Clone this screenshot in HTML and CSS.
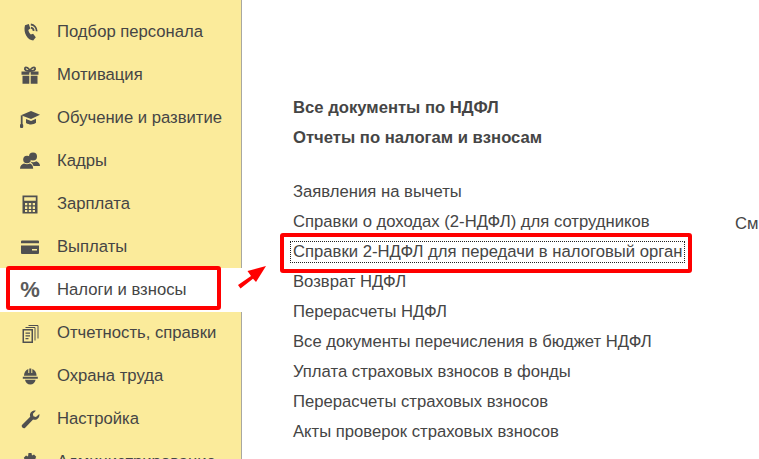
FILE: index.html
```html
<!DOCTYPE html>
<html lang="ru">
<head>
<meta charset="utf-8">
<title>Налоги и взносы</title>
<link rel="stylesheet" href="styles.css">
</head>
<body>
<div class="app">
  <nav class="sidebar">
    <a class="nav-item"><svg class="ico" viewBox="0 0 20 20"><path d="M5 3.300 8.800 2l1.500 4.600-2 1.500c.4 1.800 1.200 3.300 2.500 4.500l2.300-.9 2.700 3.500-2.600 3.300C8 18.500 2.800 11 5 3.300z"/><path class="ln" d="M10.800 2.500c3.200.4 5.800 3 5.900 6.800M10.900 5.700c1.600.2 2.700 1.500 2.800 3.200"/></svg><span>Подбор персонала</span></a>
    <a class="nav-item"><svg class="ico" viewBox="0 0 20 20"><path d="M1.500 6.500h7.800v3.200H1.500zM10.700 6.500h7.800v3.200h-7.800zM2.500 10.800h6.800v8H2.500zM10.700 10.800h6.800v8h-6.800z"/><path class="ln" d="M9.700 6C6 6 4.200 4.800 5 3c1-1.600 3.800.2 4.900 3 1.200-2.800 4-4.600 5.100-3 .8 1.800-1 3-5.100 3"/></svg><span>Мотивация</span></a>
    <a class="nav-item"><svg class="ico" viewBox="0 0 20 20"><path d="M11 3 20 6.800 11 11 1 7.200z"/><path d="M6 11v4c3.500 2.200 7.500 1.800 10-.2v-4l-5 2.300zM.8 7.200l1.800.7v8.600H.8z"/><rect x="0" y="16" width="3.200" height="4" rx="1"/></svg><span>Обучение и развитие</span></a>
    <a class="nav-item"><svg class="ico" viewBox="0 0 20 20"><circle cx="13" cy="5.500" r="4"/><path d="M10 10.500c2 1 4.500 1 6.300-.3 2 .6 3.700 2.300 3.700 4.800h-6.500c-.5-1.700-1.800-3.200-3.500-4.500z"/><circle cx="7" cy="8.500" r="3.800"/><path d="M4 12.500c1.800 1 4.200 1 6 0 1.900.7 3.200 2.300 3.200 5.200H0c0-3 1.800-4.500 4-5.200z"/></svg><span>Кадры</span></a>
    <a class="nav-item"><svg class="ico" viewBox="0 0 20 20"><path fill-rule="evenodd" d="M2.500 1.500h15v18h-15zM4.200 3.200v3.600h11.600V3.200zM5 9v2.300h2.300V9zm3.800 0v2.300h2.400V9zm3.900 0v2.300H15V9zM5 12.600v2.300h2.300v-2.300zm3.800 0v2.300h2.400v-2.300zm3.900 0v2.300H15v-2.300zM5 16.100v2h2.300v-2zm3.800 0v2h2.400v-2zm3.900 0v2H15v-2z"/></svg><span>Зарплата</span></a>
    <a class="nav-item"><svg class="ico" viewBox="0 0 20 20"><path d="M2 3.500h16a1 1 0 0 1 1 1v1.700H1V4.500a1 1 0 0 1 1-1zM1 8.500h18V16a1 1 0 0 1-1 1H2a1 1 0 0 1-1-1zM12 12v1.500h5V12z"/></svg><span>Выплаты</span></a>
    <a class="nav-item active"><span class="percent">%</span><span>Налоги и взносы</span></a>
    <a class="nav-item"><svg class="ico" viewBox="0 0 20 20"><path fill-rule="evenodd" d="M2.500 6h10.500v14H2.500zM4 7.500v11h7.500v-11zM5.500 9.500h4.500v1.300H5.500zm0 2.700h4.500v1.300H5.500zm0 2.700h3v1.300h-3z"/><path class="ln thin" d="M5.500 4.500h9.500v13M8.500 2.500h9.500v13"/></svg><span>Отчетность, справки</span></a>
    <a class="nav-item"><svg class="ico" viewBox="0 0 20 20"><path d="M4 9.800C4 6.300 5.800 4 8.300 3v4h1V2.500h2V7h1V3c2.500 1 4.300 3.300 4.300 6.800zM2.800 10.800h15v2H2.800zM5 13.700h10.600c-.6 2.800-2.600 4.800-5.300 4.800S5.600 16.500 5 13.700z"/></svg><span>Охрана труда</span></a>
    <a class="nav-item"><svg class="ico" viewBox="0 0 20 20"><path d="M19.300 5c.8 3.500-2.400 6.800-6.200 5.600L5.200 18.700c-1.700 1.700-4.700-1.200-3-3l8-7.900C9 4.300 12.300.9 15.800 1.700l-2.900 3.100.5 2.500 2.500.6z"/></svg><span>Настройка</span></a>
    <a class="nav-item"><svg class="ico" viewBox="0 0 20 20"><path fill-rule="evenodd" d="M8.500 1h3l.5 2.500 2-1 2.200 2.200-1 2 2.800.5v3l-2.800.5 1 2-2.200 2.200-2-1-.5 2.600h-3L8 14.900l-2 1-2.200-2.200 1-2L2 11.200v-3l2.800-.5-1-2L6 3.500l2 1zM10 7a3 3 0 1 0 0 6 3 3 0 0 0 0-6z"/></svg><span>Администрирование</span></a>
  </nav>
  <main class="content">
    <div class="col">
      <ul class="group strong">
        <li>Все документы по НДФЛ</li>
        <li>Отчеты по налогам и взносам</li>
      </ul>
      <ul class="group">
        <li>Заявления на вычеты</li>
        <li>Справки о доходах (2-НДФЛ) для сотрудников</li>
        <li><span class="focus">Справки 2-НДФЛ для передачи в налоговый орган</span></li>
        <li>Возврат НДФЛ</li>
        <li>Перерасчеты НДФЛ</li>
        <li>Все документы перечисления в бюджет НДФЛ</li>
        <li>Уплата страховых взносов в фонды</li>
        <li>Перерасчеты страховых взносов</li>
        <li>Акты проверок страховых взносов</li>
      </ul>
    </div>
    <div class="see">См</div>
  </main>
</div>
<div class="mark mark-nav"></div>
<div class="mark mark-item"></div>
<svg class="arrow" viewBox="0 0 31 28"><path d="M2 23 15 14 11.500 9 30 4 20 20 17 16.800 4.500 26.500z"/></svg>
</body>
</html>
```
FILE: styles.css
```css
* { box-sizing: border-box; }
html, body { margin: 0; height: 100%; overflow: hidden; background: #fff; }
body { position: relative; font-family: "Liberation Sans", Arial, sans-serif; font-size: 16.67px; color: #454545; }
.app { display: flex; width: 759px; height: 459px; overflow: hidden; }
.sidebar { width: 242px; flex: none; padding-top: 10px; background: #fbeb9b; border-right: 1px solid #a8a8a0; }
.nav-item { display: flex; align-items: center; height: 43px; padding-left: 20px; color: #454545; white-space: nowrap; }
.nav-item.active { background: #fff; margin-right: -1px; box-shadow: 0 1px #fff; }
.ico { width: 20px; height: 20px; flex: none; margin-right: 17px; fill: #505050; }
.ln { fill: none; stroke: #505050; stroke-width: 1.800; }
.ln.thin { stroke-width: 1; }
.percent { width: 20px; margin-right: 17px; font-size: 22px; font-weight: 700; color: #5a5a5a; text-align: center; }
.content { flex: 1; display: flex; position: relative; padding: 93px 0 0 51px; }
.col { width: 442px; }
.group { list-style: none; margin: 0 0 25px; padding: 0; }
.group li { height: 30px; line-height: 30px; white-space: nowrap; }
.strong li { font-weight: 700; height: 29.500px; }
.focus { display: inline-block; line-height: 20px; margin-left: -2px; padding: 0 2px; outline: 1px dotted #222; }
.see { margin-top: 121px; line-height: 20px; }
.mark { position: absolute; border: 4px solid #f00; border-radius: 3px; }
.mark-nav { left: 6px; top: 266px; width: 215px; height: 44px; }
.mark-item { left: 280px; top: 233px; width: 412px; height: 40px; }
.arrow { position: absolute; left: 236px; top: 262px; width: 31px; height: 28px; fill: #f00; }
```
